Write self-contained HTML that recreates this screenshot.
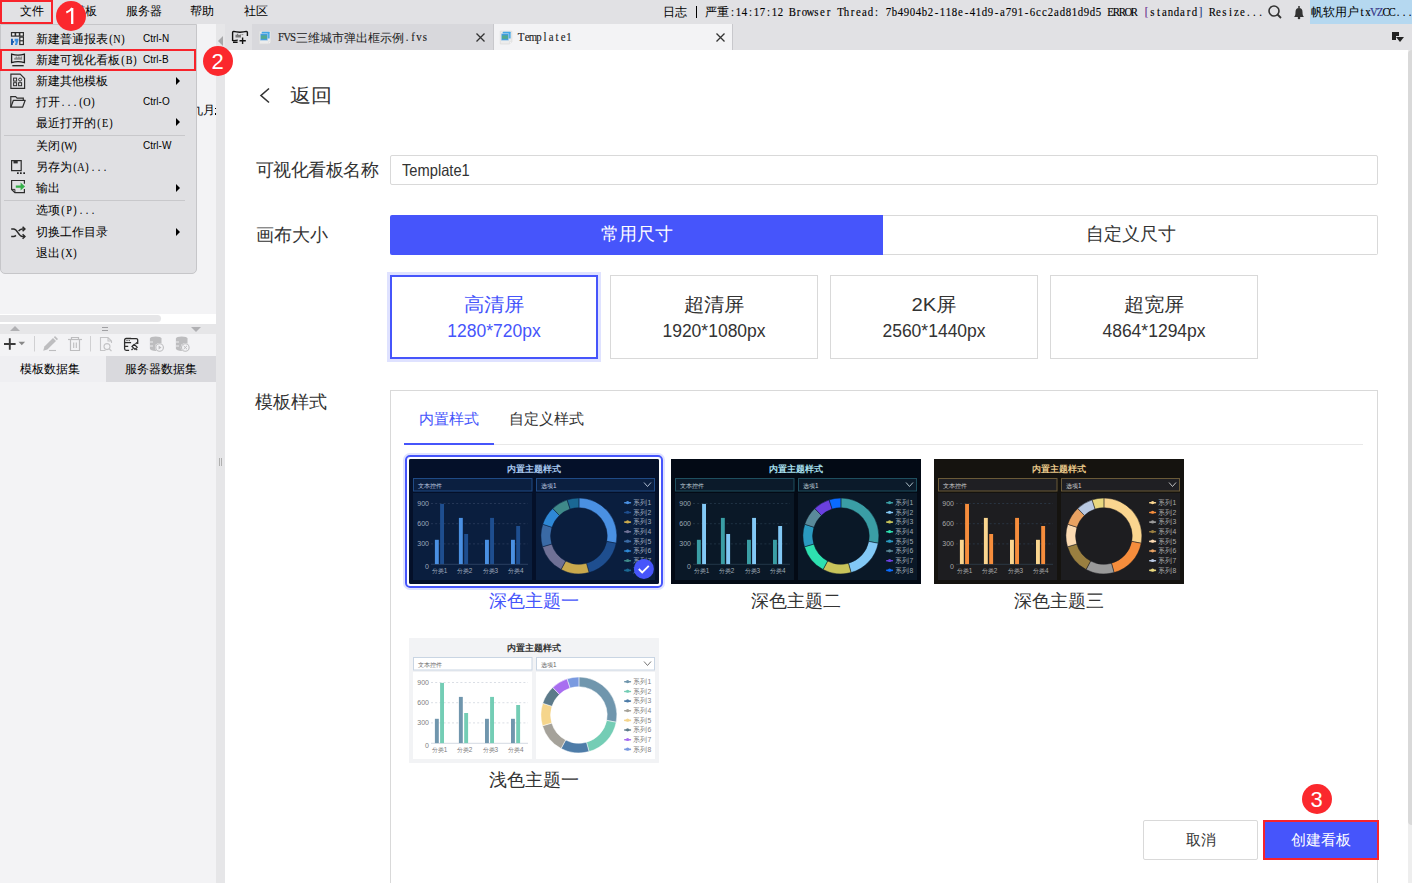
<!DOCTYPE html>
<html><head><meta charset="utf-8">
<style>
*{margin:0;padding:0;box-sizing:border-box}
html,body{width:1412px;height:883px;overflow:hidden;background:#fff;font-family:"Liberation Sans",sans-serif;color:#000}
.a{position:absolute}
.t{position:absolute;white-space:nowrap;line-height:1}
#menubar{left:0;top:0;width:1412px;height:24px;background:#e1e1e4}
#leftp{left:0;top:24px;width:216px;height:859px;background:#f3f3f5}
#split{left:216px;top:24px;width:9px;height:859px;background:#e6e6e8}
#tabbar{left:225px;top:24px;width:1187px;height:26px;background:#e1e1e4}
#content{left:225px;top:50px;width:1183px;height:833px;background:#fff}
#vscroll{left:1408px;top:50px;width:4px;height:775px;background:#d9d9d9;border-radius:4px 0 0 4px}
#vtrack{left:1408px;top:50px;width:4px;height:833px;background:#eeeeee}
.mono{font-family:"Liberation Mono",monospace;font-size:12px;letter-spacing:-1.2px}
.menu{left:0;top:24px;width:197px;height:250px;background:#e0e0e3;border:1px solid #c6c6c9;border-radius:0 0 5px 5px}
.mi{position:absolute;left:36px;font-size:12px;line-height:1;white-space:nowrap}
.sc{position:absolute;left:143px;font-size:10px;line-height:1;white-space:nowrap}
.m{font-family:"Liberation Mono",monospace;font-size:12px;letter-spacing:-1.2px}
.sep{position:absolute;left:4px;width:181px;height:1px;background:#c8c8cb}
.arr{position:absolute;left:176px;width:0;height:0;border-left:4px solid #000;border-top:4px solid transparent;border-bottom:4px solid transparent}
.badge{position:absolute;width:30px;height:30px;border-radius:50%;background:#fb282d;color:#fff;font-size:22px;line-height:31px;text-align:center;font-family:"Liberation Sans",sans-serif}
.lbl{position:absolute;font-size:18px;color:#333;line-height:1;white-space:nowrap}
.card{position:absolute;top:275px;width:208px;height:84px;border:1px solid #d9d9d9;background:#fff;text-align:center;color:#333}
.card .c1{position:absolute;left:0;right:0;top:18px;font-size:20.3px;line-height:1;transform:scaleY(0.93);transform-origin:50% 90%}
.card .c2{position:absolute;left:0;right:0;top:46.5px;font-size:17.5px;line-height:1}
</style></head><body>
<div id="menubar" class="a"></div>
<div id="leftp" class="a"></div>
<div id="split" class="a"></div>
<div id="tabbar" class="a"></div>
<div id="content" class="a"></div>
<div id="vtrack" class="a"></div><div id="vscroll" class="a"></div>

<!-- menubar text -->
<div class="t" style="left:20px;top:5px;font-size:12px">文件</div>
<div class="t" style="left:73px;top:5px;font-size:12px">模板</div>
<div class="t" style="left:126px;top:5px;font-size:12px">服务器</div>
<div class="t" style="left:190px;top:5px;font-size:12px">帮助</div>
<div class="t" style="left:244px;top:5px;font-size:12px">社区</div>

<div class="t" style="left:663px;top:6px;font-size:12px">日志</div>
<div class="a" style="left:696px;top:6px;width:1px;height:12px;background:#000"></div>
<div class="t" style="left:705px;top:6px;font-size:12px">严重</div>
<svg class="a" style="left:0;top:0" width="1300" height="24" viewBox="0 0 1300 24"><text transform="scale(0.8,1)" y="16" font-family="Liberation Serif" font-size="13.5" text-anchor="middle" fill="#000" stroke="#000" stroke-width="0.15"><tspan x="915.6">:</tspan><tspan x="923.1">1</tspan><tspan x="930.6">4</tspan><tspan x="938.1">:</tspan><tspan x="945.6">1</tspan><tspan x="953.1">7</tspan><tspan x="960.6">:</tspan><tspan x="968.1">1</tspan><tspan x="975.6">2</tspan><tspan x="990.6">B</tspan><tspan x="998.1">r</tspan><tspan x="1005.6">o</tspan><tspan x="1013.1">w</tspan><tspan x="1020.6">s</tspan><tspan x="1028.1">e</tspan><tspan x="1035.6">r</tspan><tspan x="1050.6">T</tspan><tspan x="1058.1">h</tspan><tspan x="1065.6">r</tspan><tspan x="1073.1">e</tspan><tspan x="1080.6">a</tspan><tspan x="1088.1">d</tspan><tspan x="1095.6">:</tspan><tspan x="1110.6">7</tspan><tspan x="1118.1">b</tspan><tspan x="1125.6">4</tspan><tspan x="1133.1">9</tspan><tspan x="1140.6">0</tspan><tspan x="1148.1">4</tspan><tspan x="1155.6">b</tspan><tspan x="1163.1">2</tspan><tspan x="1170.6">-</tspan><tspan x="1178.1">1</tspan><tspan x="1185.6">1</tspan><tspan x="1193.1">8</tspan><tspan x="1200.6">e</tspan><tspan x="1208.1">-</tspan><tspan x="1215.6">4</tspan><tspan x="1223.1">1</tspan><tspan x="1230.6">d</tspan><tspan x="1238.1">9</tspan><tspan x="1245.6">-</tspan><tspan x="1253.1">a</tspan><tspan x="1260.6">7</tspan><tspan x="1268.1">9</tspan><tspan x="1275.6">1</tspan><tspan x="1283.1">-</tspan><tspan x="1290.6">6</tspan><tspan x="1298.1">c</tspan><tspan x="1305.6">c</tspan><tspan x="1313.1">2</tspan><tspan x="1320.6">a</tspan><tspan x="1328.1">d</tspan><tspan x="1335.6">8</tspan><tspan x="1343.1">1</tspan><tspan x="1350.6">d</tspan><tspan x="1358.1">9</tspan><tspan x="1365.6">d</tspan><tspan x="1373.1">5</tspan><tspan x="1388.1">E</tspan><tspan x="1395.6">R</tspan><tspan x="1403.1">R</tspan><tspan x="1410.6">O</tspan><tspan x="1418.1">R</tspan><tspan x="1433.1" fill="#7a1fa2">[</tspan><tspan x="1440.6">s</tspan><tspan x="1448.1">t</tspan><tspan x="1455.6">a</tspan><tspan x="1463.1">n</tspan><tspan x="1470.6">d</tspan><tspan x="1478.1">a</tspan><tspan x="1485.6">r</tspan><tspan x="1493.1">d</tspan><tspan x="1500.6" fill="#1f3fa2">]</tspan><tspan x="1515.6">R</tspan><tspan x="1523.1">e</tspan><tspan x="1530.6">s</tspan><tspan x="1538.1">i</tspan><tspan x="1545.6">z</tspan><tspan x="1553.1">e</tspan><tspan x="1560.6">.</tspan><tspan x="1568.1">.</tspan><tspan x="1575.6">.</tspan></text></svg>
<div class="a" style="left:1310px;top:0;width:102px;height:24px;background:#b5d8f0"></div>
<div class="a" style="left:0;top:0;width:1412px;height:24px;overflow:hidden"><svg class="a" style="left:0;top:0px" width="1412" height="24" viewBox="0 0 1412 24"><text y="16.2" font-family="Liberation Sans,sans-serif" font-size="12" fill="#000"><tspan x="1311.0">帆</tspan><tspan x="1323.0">软</tspan><tspan x="1335.0">用</tspan><tspan x="1347.0">户</tspan></text><text transform="scale(0.8,1)" y="16.2" font-family="Liberation Serif" font-size="13.5" text-anchor="middle" fill="#000" stroke="#000" stroke-width="0.15"><tspan x="1702.5">t</tspan><tspan x="1710.0">x</tspan><tspan x="1717.5" fill="#3a3aa0">V</tspan><tspan x="1725.0" fill="#3a3aa0">Z</tspan><tspan x="1732.5">C</tspan><tspan x="1740.0">C</tspan><tspan x="1747.5">.</tspan><tspan x="1755.0">.</tspan><tspan x="1762.5">.</tspan></text></svg></div>

<!-- left panel lower -->
<div class="a" style="left:197px;top:100px;width:19px;height:20px;overflow:hidden"><div class="t" style="left:-6px;top:4px;font-size:12px">九月</div><div class="a" style="left:18px;top:8px;width:1px;height:1px;background:#000"></div><div class="a" style="left:18px;top:13px;width:1px;height:2px;background:#000"></div></div>
<div class="a" style="left:0;top:314px;width:216px;height:10px;background:#fff"></div>
<div class="a" style="left:0;top:315px;width:161px;height:7px;background:#e6e6e8;border-radius:0 4px 4px 0"></div>
<div class="a" style="left:0;top:324px;width:216px;height:10px;background:#e6e6e8"></div>
<div class="a" style="left:10px;top:326px;width:0;height:0;border-left:5px solid transparent;border-right:5px solid transparent;border-bottom:5px solid #b0b0b3"></div>
<div class="a" style="left:102px;top:327px;width:6px;height:1px;background:#a0a0a3"></div>
<div class="a" style="left:102px;top:330px;width:6px;height:1px;background:#a0a0a3"></div>
<div class="a" style="left:191px;top:327px;width:0;height:0;border-left:5px solid transparent;border-right:5px solid transparent;border-top:5px solid #b0b0b3"></div>
<svg class="a" style="left:0;top:334px" width="216" height="22" viewBox="0 0 216 22">
 <path d="M4 10h11.6M9.8 4.2v11.6" stroke="#3a3a3a" stroke-width="1.9"/>
 <path d="M18.5 7.8h6.6l-3.3 3.4z" fill="#888"/>
 <path d="M34.5 2v15.5M90.5 2v15.5" stroke="#d0d0d2"/>
 <path d="M43.2 16.8l1.2-4.2 8.6-8.6 3 3-8.6 8.6z" fill="#bdbdbf"/><path d="M53.8 3.2l1.2-1.2 3 3-1.2 1.2z" fill="#bdbdbf"/><path d="M49 16.5h7" stroke="#bdbdbf" stroke-width="1.1"/>
 <path d="M68 5.5h14" stroke="#bdbdbf" stroke-width="1.2"/><path d="M71.5 5.5v-2h7v2" stroke="#bdbdbf" stroke-width="1.2" fill="none"/><path d="M70.5 6v10.5h9V6" stroke="#bdbdbf" stroke-width="1.2" fill="none"/><path d="M73.7 8.5v5.5M76.3 8.5v5.5" stroke="#bdbdbf" stroke-width="1.1"/>
 <path d="M105.5 16.5h-5v-13h7.5l3.5 3.5v2M108 3.5v3.5h3.5" stroke="#c4c4c6" stroke-width="1.1" fill="none"/><circle cx="107" cy="12.6" r="3" stroke="#c4c4c6" stroke-width="1.1" fill="none"/><path d="M109.2 14.8l2.3 2.3" stroke="#c4c4c6" stroke-width="1.3"/>
 <path d="M131 4.6h5.2a1.5 1.5 0 0 1 1.5 1.5v4M124.6 10v-4a1.5 1.5 0 0 1 1.5-1.5h5M124.6 10v4.8a1.5 1.5 0 0 0 1.5 1.5h3" stroke="#2e2e2e" stroke-width="1.3" fill="none"/>
 <path d="M124.6 8.6h6.5M124.6 12.3h3.6" stroke="#2e2e2e" stroke-width="1.2"/><circle cx="127" cy="6.6" r=".7" fill="#2e2e2e"/><circle cx="129.2" cy="6.6" r=".7" fill="#2e2e2e"/>
 <path d="M131.5 16l1.3-1.3M135.5 10l1.6-1.6" stroke="#2e2e2e" stroke-width="1.3"/><path d="M132 12.5l2.2-2.2 3 3-2.2 2.2z" stroke="#2e2e2e" stroke-width="1.2" fill="none"/><path d="M137.2 16.2l-1-1" stroke="#2e2e2e" stroke-width="1.2"/>
 <ellipse cx="155.7" cy="4.6" rx="5.8" ry="2.1" fill="#bdbdbf"/><path d="M149.9 4.6v10.2c0 1.2 2.6 2.1 5.8 2.1s5.8-.9 5.8-2.1V4.6" fill="#bdbdbf"/><path d="M150 8h3M150 12h3" stroke="#f3f3f5" stroke-width=".9"/>
 <circle cx="159.6" cy="13.5" r="4.6" fill="#f3f3f5"/><circle cx="159.6" cy="13.5" r="3.8" fill="none" stroke="#bdbdbf" stroke-width="1.1"/><path d="M158.6 11.6v3.8l2.9-1.9z" fill="#bdbdbf"/>
 <ellipse cx="181.7" cy="4.6" rx="5.8" ry="2.1" fill="#bdbdbf"/><path d="M175.9 4.6v10.2c0 1.2 2.6 2.1 5.8 2.1s5.8-.9 5.8-2.1V4.6" fill="#bdbdbf"/><path d="M176 8h3M176 12h3" stroke="#f3f3f5" stroke-width=".9"/>
 <circle cx="185.3" cy="13.5" r="4.6" fill="#f3f3f5"/><circle cx="185.3" cy="13.5" r="3.8" fill="none" stroke="#bdbdbf" stroke-width="1.1"/><path d="M183.6 11.8l3.4 3.4M187 11.8l-3.4 3.4" stroke="#bdbdbf" stroke-width="1"/>
</svg>
<div class="a" style="left:0;top:356px;width:106px;height:26px;background:#efeff2"></div>
<div class="a" style="left:106px;top:356px;width:110px;height:26px;background:#d9d9dd"></div>
<div class="t" style="left:20px;top:363px;font-size:12px">模板数据集</div>
<div class="t" style="left:125px;top:363px;font-size:12px">服务器数据集</div>
<div class="a" style="left:219px;top:458px;width:1px;height:8px;background:#b0b0b0"></div>
<div class="a" style="left:221px;top:458px;width:1px;height:8px;background:#b0b0b0"></div>
<div class="a" style="left:218px;top:36px;width:0;height:0;border-right:5px solid #a8a8aa;border-top:5px solid transparent;border-bottom:5px solid transparent"></div>

<!-- dropdown menu -->
<div class="a menu"></div>
<div class="a" style="left:0;top:49px;width:196px;height:22px;border:2px solid #f8232b"></div>
<svg class="a" style="left:0;top:27px" width="136" height="20" viewBox="0 27 136 20"><text y="42.8" font-family="Liberation Sans,sans-serif" font-size="12" fill="#000"><tspan x="36.0">新</tspan><tspan x="48.0">建</tspan><tspan x="60.0">普</tspan><tspan x="72.0">通</tspan><tspan x="84.0">报</tspan><tspan x="96.0">表</tspan></text><text transform="scale(0.78,1)" y="42.8" font-family="Liberation Serif" font-size="13" text-anchor="middle" fill="#000" stroke="#000" stroke-width="0.1"><tspan x="142.3">(</tspan><tspan x="150.0">N</tspan><tspan x="157.7">)</tspan></text></svg><div class="sc" style="top:34px">Ctrl-N</div>
<svg class="a" style="left:0;top:48px" width="148" height="20" viewBox="0 48 148 20"><text y="63.8" font-family="Liberation Sans,sans-serif" font-size="12" fill="#000"><tspan x="36.0">新</tspan><tspan x="48.0">建</tspan><tspan x="60.0">可</tspan><tspan x="72.0">视</tspan><tspan x="84.0">化</tspan><tspan x="96.0">看</tspan><tspan x="108.0">板</tspan></text><text transform="scale(0.78,1)" y="63.8" font-family="Liberation Serif" font-size="13" text-anchor="middle" fill="#000" stroke="#000" stroke-width="0.1"><tspan x="157.7">(</tspan><tspan x="165.4">B</tspan><tspan x="173.1">)</tspan></text></svg><div class="sc" style="top:55px">Ctrl-B</div>
<svg class="a" style="left:0;top:69px" width="118" height="20" viewBox="0 69 118 20"><text y="84.8" font-family="Liberation Sans,sans-serif" font-size="12" fill="#000"><tspan x="36.0">新</tspan><tspan x="48.0">建</tspan><tspan x="60.0">其</tspan><tspan x="72.0">他</tspan><tspan x="84.0">模</tspan><tspan x="96.0">板</tspan></text></svg><div class="arr" style="top:77px"></div>
<svg class="a" style="left:0;top:90px" width="106" height="20" viewBox="0 90 106 20"><text y="105.8" font-family="Liberation Sans,sans-serif" font-size="12" fill="#000"><tspan x="36.0">打</tspan><tspan x="48.0">开</tspan></text><text transform="scale(0.78,1)" y="105.8" font-family="Liberation Serif" font-size="13" text-anchor="middle" fill="#000" stroke="#000" stroke-width="0.1"><tspan x="80.8">.</tspan><tspan x="88.5">.</tspan><tspan x="96.2">.</tspan><tspan x="103.8">(</tspan><tspan x="111.5">O</tspan><tspan x="119.2">)</tspan></text></svg><div class="sc" style="top:97px">Ctrl-O</div>
<svg class="a" style="left:0;top:111px" width="124" height="20" viewBox="0 111 124 20"><text y="126.8" font-family="Liberation Sans,sans-serif" font-size="12" fill="#000"><tspan x="36.0">最</tspan><tspan x="48.0">近</tspan><tspan x="60.0">打</tspan><tspan x="72.0">开</tspan><tspan x="84.0">的</tspan></text><text transform="scale(0.78,1)" y="126.8" font-family="Liberation Serif" font-size="13" text-anchor="middle" fill="#000" stroke="#000" stroke-width="0.1"><tspan x="126.9">(</tspan><tspan x="134.6">E</tspan><tspan x="142.3">)</tspan></text></svg><div class="arr" style="top:118px"></div>
<div class="sep" style="top:135px"></div>
<svg class="a" style="left:0;top:134px" width="88" height="20" viewBox="0 134 88 20"><text y="149.8" font-family="Liberation Sans,sans-serif" font-size="12" fill="#000"><tspan x="36.0">关</tspan><tspan x="48.0">闭</tspan></text><text transform="scale(0.78,1)" y="149.8" font-family="Liberation Serif" font-size="13" text-anchor="middle" fill="#000" stroke="#000" stroke-width="0.1"><tspan x="80.8">(</tspan><tspan x="88.5">W</tspan><tspan x="96.2">)</tspan></text></svg><div class="sc" style="top:141px">Ctrl-W</div>
<svg class="a" style="left:0;top:155px" width="118" height="20" viewBox="0 155 118 20"><text y="170.8" font-family="Liberation Sans,sans-serif" font-size="12" fill="#000"><tspan x="36.0">另</tspan><tspan x="48.0">存</tspan><tspan x="60.0">为</tspan></text><text transform="scale(0.78,1)" y="170.8" font-family="Liberation Serif" font-size="13" text-anchor="middle" fill="#000" stroke="#000" stroke-width="0.1"><tspan x="96.2">(</tspan><tspan x="103.8">A</tspan><tspan x="111.5">)</tspan><tspan x="119.2">.</tspan><tspan x="126.9">.</tspan><tspan x="134.6">.</tspan></text></svg>
<svg class="a" style="left:0;top:176px" width="70" height="20" viewBox="0 176 70 20"><text y="191.8" font-family="Liberation Sans,sans-serif" font-size="12" fill="#000"><tspan x="36.0">输</tspan><tspan x="48.0">出</tspan></text></svg><div class="arr" style="top:184px"></div>
<div class="sep" style="top:200px"></div>
<svg class="a" style="left:0;top:198px" width="106" height="20" viewBox="0 198 106 20"><text y="213.8" font-family="Liberation Sans,sans-serif" font-size="12" fill="#000"><tspan x="36.0">选</tspan><tspan x="48.0">项</tspan></text><text transform="scale(0.78,1)" y="213.8" font-family="Liberation Serif" font-size="13" text-anchor="middle" fill="#000" stroke="#000" stroke-width="0.1"><tspan x="80.8">(</tspan><tspan x="88.5">P</tspan><tspan x="96.2">)</tspan><tspan x="103.8">.</tspan><tspan x="111.5">.</tspan><tspan x="119.2">.</tspan></text></svg>
<svg class="a" style="left:0;top:220px" width="118" height="20" viewBox="0 220 118 20"><text y="235.8" font-family="Liberation Sans,sans-serif" font-size="12" fill="#000"><tspan x="36.0">切</tspan><tspan x="48.0">换</tspan><tspan x="60.0">工</tspan><tspan x="72.0">作</tspan><tspan x="84.0">目</tspan><tspan x="96.0">录</tspan></text></svg><div class="arr" style="top:228px"></div>
<svg class="a" style="left:0;top:241px" width="88" height="20" viewBox="0 241 88 20"><text y="256.8" font-family="Liberation Sans,sans-serif" font-size="12" fill="#000"><tspan x="36.0">退</tspan><tspan x="48.0">出</tspan></text><text transform="scale(0.78,1)" y="256.8" font-family="Liberation Serif" font-size="13" text-anchor="middle" fill="#000" stroke="#000" stroke-width="0.1"><tspan x="80.8">(</tspan><tspan x="88.5">X</tspan><tspan x="96.2">)</tspan></text></svg>
<svg class="a" style="left:0;top:24px" width="30" height="240" viewBox="0 0 30 240">
 <rect x="10.9" y="8" width="13.1" height="4.7" fill="#2e2e2e"/><rect x="12.1" y="9.2" width="2.5" height="2.3" fill="#f0f0f0"/><rect x="16.2" y="9.2" width="2.6" height="2.3" fill="#f0f0f0"/><rect x="20.4" y="9.2" width="2.4" height="2.3" fill="#f0f0f0"/>
 <rect x="19.2" y="12.5" width="4.8" height="8.6" fill="#2e2e2e"/><rect x="20.4" y="13.7" width="2.4" height="2.5" fill="#f0f0f0"/><rect x="20.4" y="17.4" width="2.4" height="2.5" fill="#f0f0f0"/>
 <path d="M11 14.8h1.9v2.3h1.1v1.6h-1.1v2.4H11z" fill="#1a5fb4"/><path d="M14.6 14.8h3.8v1.6l-1.3 4.7h-2.2l1-3.6h-1.3z" fill="#3d8fe0"/>
 <path d="M11.6 30.2c2.2.6 4.4.9 6.4.9s4.2-.3 6.4-.9v8.4c-2.2-.6-4.4-.9-6.4-.9s-4.2.3-6.4.9z" stroke="#1e1e1e" stroke-width="1.3" fill="none"/>
 <path d="M14.2 35.8v-1.9l1.6-.5v-.9h1.3v.9l1.1.2v-1h1.4v1l1.2-.2v-.8h1.3v3.2z" fill="#8a8a8a"/><path d="M12.3 41.7h11.4" stroke="#1e1e1e" stroke-width="1.3"/>
 <path d="M10.9 50.1h9.3l4.4 4.4v9.9H10.9z" stroke="#2e2e2e" stroke-width="1.2" fill="none"/>
 <rect x="13.6" y="54.1" width="3" height="3" stroke="#2e2e2e" stroke-width="1" fill="none"/><circle cx="20.1" cy="55.6" r="1.5" stroke="#2e2e2e" stroke-width="1" fill="none"/><rect x="13.6" y="58.7" width="3" height="3" stroke="#2e2e2e" stroke-width="1" fill="none"/><rect x="18.6" y="58.7" width="3" height="3" stroke="#2e2e2e" stroke-width="1" fill="none"/>
 <path d="M10.8 83.2V72.6h4.8l1.5 1.5h6.2v2.2" stroke="#2e2e2e" stroke-width="1.2" fill="none"/><path d="M10.8 83.2l2.6-6.9h11.8l-2.6 6.9z" stroke="#2e2e2e" stroke-width="1.2" fill="none" stroke-linejoin="round"/>
 <path d="M11.6 136.6h9.6v10.1h-9.6z" stroke="#2e2e2e" stroke-width="1.2" fill="none"/><rect x="13.5" y="137" width="4.2" height="2.4" fill="#2e2e2e"/>
 <rect x="17" y="148.3" width="1.7" height="1.7" fill="#222"/><rect x="20" y="148.3" width="1.7" height="1.7" fill="#222"/><rect x="23.3" y="148.3" width="1.7" height="1.7" fill="#222"/>
 <path d="M24.4 159.8v-3.3H11.6v8.9l3.3 3.3h9.5v-3.6" stroke="#2e2e2e" stroke-width="1.2" fill="none"/><path d="M11.8 165.4h3.1v3.1" stroke="#2e2e2e" stroke-width="1" fill="none"/>
 <path d="M15.8 161.4h4.8v-2.8l4.4 4-4.4 4v-2.8h-4.8z" fill="#35b04a"/>
 <path d="M11.2 205h2.4c1.9 0 2.9 1.4 4.3 3.7s2.5 3.8 4.5 3.8h2.2" stroke="#2a2a2a" stroke-width="1.5" fill="none"/>
 <path d="M11.2 212.5h2.4c.9 0 1.6-.4 2.3-1.1M18.6 207.2c.9-1.4 1.9-2.2 3.6-2.2h2.2" stroke="#2a2a2a" stroke-width="1.5" fill="none"/>
 <path d="M22.6 202.8l2.3 2.2-2.3 2.2M22.6 210.3l2.3 2.2-2.3 2.2" stroke="#2a2a2a" stroke-width="1.5" fill="none"/>
</svg>
<div class="badge" style="left:56px;top:1px"><svg width="30" height="30" viewBox="0 0 30 30" style="position:absolute;left:-0.5px;top:0"><path d="M16.2 7v16" stroke="#fff" stroke-width="2.3"/><path d="M10.3 11.6c2.6-1 4.6-2.6 5.9-4.6" stroke="#fff" stroke-width="2.1" fill="none"/></svg></div>
<div class="a" style="left:0;top:0;width:53px;height:24px;border:2px solid #f8232b"></div>
<div class="badge" style="left:202.5px;top:46px">2</div>

<!-- tabbar -->
<svg class="a" style="left:225px;top:24px" width="26" height="26" viewBox="0 0 26 26">
 <path d="M7.6 17V8.6c0-.8.3-1.2 1-1.2 2 .6 4 .8 6.4.8s4.4-.2 6.4-.8c.7 0 1 .4 1 1.2v3.4" stroke="#111" stroke-width="1.4" fill="none"/>
 <path d="M7.6 16.4c.5.3 1 .3 1.6.2 1.3-.3 2.5-.4 3.6-.4" stroke="#111" stroke-width="1.3" fill="none"/>
 <path d="M10.5 13.4v-2.6h1.4v-1h1.4v1.2h1.4v-.5h1.3v2.9z" fill="#7a7a7a"/><path d="M16.5 10.6h1.8" stroke="#7a7a7a" stroke-width=".8"/>
 <path d="M8 18.3h4.6M14.5 16.7h6.3M17.6 13.4v6.6" stroke="#111" stroke-width="1.4"/>
</svg>
<div class="a" style="left:252px;top:24px;width:241px;height:26px;background:#d8d8dc"></div>
<div class="a" style="left:493px;top:24px;width:240px;height:26px;background:#f3f3f5;border-left:1px solid #c8c8cc;border-right:1px solid #c8c8cc"></div>
<svg class="a" style="left:258px;top:29.5px" width="14" height="16" viewBox="0 0 14 16">
 <path d="M1.3 1.2h11.5v10.5l-2.3 2.3H1.3z" fill="#ececec" stroke="#dcdcdc" stroke-width=".8"/><path d="M10.5 14v-2.3h2.3" fill="#f8f8f8" stroke="#dcdcdc" stroke-width=".6"/><rect x="3.8" y="1.8" width="7.8" height="6.8" rx=".5" fill="#40a6e8"/><rect x="2.2" y="3.6" width="7.5" height="6.8" rx=".5" fill="#3c9ae0" stroke="#ececec" stroke-width=".5"/><rect x="3" y="5.5" width="6" height="3.2" fill="#5ab070"/><path d="M4 5.6v3M6 5.6v3M8 5.6v3" stroke="#3c9ae0" stroke-width=".6"/>
</svg>
<svg class="a" style="left:0;top:24px" width="438" height="26" viewBox="0 24 438 26"><text y="41.5" font-family="Liberation Sans,sans-serif" font-size="12" fill="#222"><tspan x="296.0">三</tspan><tspan x="308.0">维</tspan><tspan x="320.0">城</tspan><tspan x="332.0">市</tspan><tspan x="344.0">弹</tspan><tspan x="356.0">出</tspan><tspan x="368.0">框</tspan><tspan x="380.0">示</tspan><tspan x="392.0">例</tspan></text><text transform="scale(0.8,1)" y="41.5" font-family="Liberation Serif" font-size="13.5" text-anchor="middle" fill="#222" stroke="#222" stroke-width="0.15"><tspan x="351.2">F</tspan><tspan x="358.8">V</tspan><tspan x="366.2">S</tspan><tspan x="508.8">.</tspan><tspan x="516.2">f</tspan><tspan x="523.8">v</tspan><tspan x="531.2">s</tspan></text></svg>
<svg class="a" style="left:475px;top:32px" width="11" height="11" viewBox="0 0 11 11"><path d="M1.5 1.5l8 8M9.5 1.5l-8 8" stroke="#333" stroke-width="1.3"/></svg>
<svg class="a" style="left:499px;top:29.5px" width="14" height="16" viewBox="0 0 14 16">
 <path d="M1.3 1.2h11.5v10.5l-2.3 2.3H1.3z" fill="#ececec" stroke="#dcdcdc" stroke-width=".8"/><path d="M10.5 14v-2.3h2.3" fill="#f8f8f8" stroke="#dcdcdc" stroke-width=".6"/><rect x="3.8" y="1.8" width="7.8" height="6.8" rx=".5" fill="#40a6e8"/><rect x="2.2" y="3.6" width="7.5" height="6.8" rx=".5" fill="#3c9ae0" stroke="#ececec" stroke-width=".5"/><rect x="3" y="5.5" width="6" height="3.2" fill="#5ab070"/><path d="M4 5.6v3M6 5.6v3M8 5.6v3" stroke="#3c9ae0" stroke-width=".6"/>
</svg>
<svg class="a" style="left:0;top:24px" width="582" height="26" viewBox="0 24 582 26"><text transform="scale(0.8,1)" y="41.5" font-family="Liberation Serif" font-size="13.5" text-anchor="middle" fill="#222" stroke="#222" stroke-width="0.15"><tspan x="651.2">T</tspan><tspan x="658.8">e</tspan><tspan x="666.2">m</tspan><tspan x="673.8">p</tspan><tspan x="681.2">l</tspan><tspan x="688.8">a</tspan><tspan x="696.2">t</tspan><tspan x="703.8">e</tspan><tspan x="711.2">1</tspan></text></svg>
<svg class="a" style="left:715px;top:32px" width="11" height="11" viewBox="0 0 11 11"><path d="M1.5 1.5l8 8M9.5 1.5l-8 8" stroke="#333" stroke-width="1.3"/></svg>
<svg class="a" style="left:1390px;top:31px" width="16" height="13" viewBox="0 0 16 13">
 <path d="M2 1h7v4h-3v4h-4z" fill="#222"/><path d="M6 6h8l-4 5z" fill="#222"/>
</svg>
<!-- search & bell -->
<svg class="a" style="left:1266px;top:4px" width="42" height="16" viewBox="0 0 42 16">
 <circle cx="8" cy="7" r="5" stroke="#333" stroke-width="1.6" fill="none"/><path d="M11.5 10.5l3.5 3.5" stroke="#333" stroke-width="1.8"/>
 <path d="M28 13c1-1 1.5-2 1.5-5a3.5 4 0 0 1 7 0c0 3 .5 4 1.5 5z" fill="#333"/><circle cx="33" cy="14" r="1.3" fill="#333"/><circle cx="33" cy="3" r="1" fill="#333"/>
</svg>

<!-- content -->
<svg class="a" style="left:258px;top:86px" width="14" height="20" viewBox="0 0 14 20"><path d="M11 2.5l-8 7 8 7" stroke="#333" stroke-width="1.6" fill="none"/></svg>
<div class="lbl" style="left:289.5px;top:85px;font-size:20.8px;transform:scaleY(0.9);transform-origin:0 100%">返回</div>
<div class="lbl" style="left:256px;top:161px;letter-spacing:-0.55px">可视化看板名称</div>
<div class="a" style="left:390px;top:155px;width:988px;height:30px;border:1px solid #d9d9d9;border-radius:2px"></div>
<div class="t" style="left:401.5px;top:161.5px;font-size:16.5px;color:#333;transform:scaleX(0.89);transform-origin:0 0">Template1</div>
<div class="lbl" style="left:256px;top:226px">画布大小</div>
<div class="a" style="left:390px;top:215px;width:493px;height:40px;background:#4655fb;border-radius:2px 0 0 2px"></div>
<div class="a" style="left:883px;top:215px;width:495px;height:40px;border:1px solid #d9d9d9;border-left:0;border-radius:0 2px 2px 0"></div>
<div class="t" style="left:390px;top:225px;width:493px;text-align:center;font-size:18px;color:#fff">常用尺寸</div>
<div class="t" style="left:883px;top:225px;width:495px;text-align:center;font-size:18px;color:#333">自定义尺寸</div>
<div class="card" style="left:390px;border:2px solid #4655fb;box-shadow:0 0 0 3px #dfe2ff;color:#4655fb"><div class="c1" style="top:17px">高清屏</div><div class="c2" style="top:45.5px">1280*720px</div></div>
<div class="card" style="left:610px"><div class="c1">超清屏</div><div class="c2">1920*1080px</div></div>
<div class="card" style="left:830px"><div class="c1">2K屏</div><div class="c2">2560*1440px</div></div>
<div class="card" style="left:1050px"><div class="c1">超宽屏</div><div class="c2">4864*1294px</div></div>
<div class="lbl" style="left:255px;top:393px">模板样式</div>
<div class="a" style="left:390px;top:390px;width:988px;height:500px;border:1px solid #d9d9d9"></div>
<div class="a" style="left:404px;top:444px;width:959px;height:1px;background:#e8e8e8"></div>
<div class="a" style="left:404px;top:443px;width:90px;height:2px;background:#4655fb"></div>
<div class="t" style="left:419px;top:411px;font-size:15px;color:#4655fb">内置样式</div>
<div class="t" style="left:509px;top:411px;font-size:15px;color:#333">自定义样式</div>
<div class="a" style="left:405px;top:455px;width:258px;height:133px;border:2px solid #4655fb;border-radius:5px;box-shadow:0 0 0 2px #dfe2ff"></div>
<div id="th1" class="a" style="left:409px;top:459px;width:250px;height:125px;background:#041029;border-radius:2px"><svg class="a" style="left:0;top:0" width="250" height="125" viewBox="0 0 250 125"><rect width="250" height="125" rx="2" fill="#041029"/><text x="125" y="13.3" text-anchor="middle" font-size="8.9" font-weight="bold" fill="#a8c8f0">内置主题样式</text><rect x="4.5" y="19.5" width="118.5" height="12.5" fill="#0b1f40" stroke="#1f4a85"/><rect x="127.5" y="19.5" width="118" height="12.5" fill="#0b1f40" stroke="#1f4a85"/><text x="9" y="28.5" font-size="6.3" fill="#c0cce0">文本控件</text><text x="132" y="28.5" font-size="6.3" fill="#c0cce0">选项1</text><path d="M235 23.5l3.5 4 3.5-4" stroke="#c0cce0" stroke-width="0.9" fill="none"/><rect x="4" y="34" width="119" height="87" fill="#0a1e3e"/><rect x="127" y="34" width="119" height="87" fill="#0a1e3e"/><path d="M22 44.5H119" stroke="#2c3d5e" stroke-width="0.8" stroke-dasharray="2 2.2"/><path d="M22 64.7H119" stroke="#2c3d5e" stroke-width="0.8" stroke-dasharray="2 2.2"/><path d="M22 84.9H119" stroke="#2c3d5e" stroke-width="0.8" stroke-dasharray="2 2.2"/><path d="M22 105.3H119" stroke="#34486a" stroke-width="0.8"/><text x="20" y="46.9" text-anchor="end" font-size="7" fill="#9ea8bc">900</text><text x="20" y="67.1" text-anchor="end" font-size="7" fill="#9ea8bc">600</text><text x="20" y="87.3" text-anchor="end" font-size="7" fill="#9ea8bc">300</text><text x="20" y="109.8" text-anchor="end" font-size="7" fill="#9ea8bc">0</text><rect x="25.9" y="80.8" width="3.9" height="24.3" fill="#4a90e2"/><rect x="31.1" y="44.9" width="3.9" height="60.2" fill="#1e4e8f"/><rect x="49.9" y="58.9" width="3.9" height="46.2" fill="#4a90e2"/><rect x="55.2" y="75" width="3.9" height="30.1" fill="#1e4e8f"/><rect x="76" y="80.8" width="3.9" height="24.3" fill="#4a90e2"/><rect x="81.1" y="58.9" width="3.9" height="46.2" fill="#1e4e8f"/><rect x="102" y="80.8" width="3.9" height="24.3" fill="#4a90e2"/><rect x="107.2" y="67" width="3.9" height="38.1" fill="#1e4e8f"/><text x="22.8" y="114.2" font-size="6.4" fill="#9ea8bc">分类1</text><text x="47.8" y="114.2" font-size="6.4" fill="#9ea8bc">分类2</text><text x="73.6" y="114.2" font-size="6.4" fill="#9ea8bc">分类3</text><text x="98.9" y="114.2" font-size="6.4" fill="#9ea8bc">分类4</text><path d="M169.90 39.00A38 38 0 0 1 207.20 84.25L197.68 82.40A28.3 28.3 0 0 0 169.90 48.70Z" fill="#4a90e2" stroke="#0a1e3e" stroke-width="0.5"/><path d="M207.20 84.25A38 38 0 0 1 180.06 113.62L177.46 104.27A28.3 28.3 0 0 0 197.68 82.40Z" fill="#1e4e8f" stroke="#0a1e3e" stroke-width="0.5"/><path d="M180.06 113.62A38 38 0 0 1 152.06 110.55L156.61 101.99A28.3 28.3 0 0 0 177.46 104.27Z" fill="#c9a94d" stroke="#0a1e3e" stroke-width="0.5"/><path d="M152.06 110.55A38 38 0 0 1 133.46 87.79L142.77 85.04A28.3 28.3 0 0 0 156.61 101.99Z" fill="#6f7196" stroke="#0a1e3e" stroke-width="0.5"/><path d="M133.46 87.79A38 38 0 0 1 133.76 65.26L142.99 68.25A28.3 28.3 0 0 0 142.77 85.04Z" fill="#3a6aa5" stroke="#0a1e3e" stroke-width="0.5"/><path d="M133.76 65.26A38 38 0 0 1 143.74 49.44L150.42 56.47A28.3 28.3 0 0 0 142.99 68.25Z" fill="#2e88d6" stroke="#0a1e3e" stroke-width="0.5"/><path d="M143.74 49.44A38 38 0 0 1 158.16 40.86L161.15 50.09A28.3 28.3 0 0 0 150.42 56.47Z" fill="#3f8a8a" stroke="#0a1e3e" stroke-width="0.5"/><path d="M158.16 40.86A38 38 0 0 1 169.90 39.00L169.90 48.70A28.3 28.3 0 0 0 161.15 50.09Z" fill="#1a6894" stroke="#0a1e3e" stroke-width="0.5"/><path d="M215.8 43.80h5.6" stroke="#4a90e2" stroke-width="1.6" stroke-linecap="round"/><circle cx="218.6" cy="43.60" r="1.6" fill="#4a90e2"/><text x="224.4" y="46.00" font-size="6.8" fill="#9ea8bc">系列1</text><path d="M215.8 53.45h5.6" stroke="#1e4e8f" stroke-width="1.6" stroke-linecap="round"/><circle cx="218.6" cy="53.25" r="1.6" fill="#1e4e8f"/><text x="224.4" y="55.65" font-size="6.8" fill="#9ea8bc">系列2</text><path d="M215.8 63.10h5.6" stroke="#c9a94d" stroke-width="1.6" stroke-linecap="round"/><circle cx="218.6" cy="62.90" r="1.6" fill="#c9a94d"/><text x="224.4" y="65.30" font-size="6.8" fill="#9ea8bc">系列3</text><path d="M215.8 72.75h5.6" stroke="#6f7196" stroke-width="1.6" stroke-linecap="round"/><circle cx="218.6" cy="72.55" r="1.6" fill="#6f7196"/><text x="224.4" y="74.95" font-size="6.8" fill="#9ea8bc">系列4</text><path d="M215.8 82.40h5.6" stroke="#3a6aa5" stroke-width="1.6" stroke-linecap="round"/><circle cx="218.6" cy="82.20" r="1.6" fill="#3a6aa5"/><text x="224.4" y="84.60" font-size="6.8" fill="#9ea8bc">系列5</text><path d="M215.8 92.05h5.6" stroke="#2e88d6" stroke-width="1.6" stroke-linecap="round"/><circle cx="218.6" cy="91.85" r="1.6" fill="#2e88d6"/><text x="224.4" y="94.25" font-size="6.8" fill="#9ea8bc">系列6</text><path d="M215.8 101.70h5.6" stroke="#3f8a8a" stroke-width="1.6" stroke-linecap="round"/><circle cx="218.6" cy="101.50" r="1.6" fill="#3f8a8a"/><text x="224.4" y="103.90" font-size="6.8" fill="#9ea8bc">系列7</text><path d="M215.8 111.35h5.6" stroke="#1a6894" stroke-width="1.6" stroke-linecap="round"/><circle cx="218.6" cy="111.15" r="1.6" fill="#1a6894"/><text x="224.4" y="113.55" font-size="6.8" fill="#9ea8bc">系列8</text><circle cx="234.9" cy="109.9" r="10" fill="#4655fb"/><path d="M229.8 110l3.4 3.4 6.6-6.6" stroke="#fff" stroke-width="1.8" fill="none"/></svg></div><!--/th1-->
<div id="th2" class="a" style="left:671px;top:459px;width:250px;height:125px;background:#030b17"><svg class="a" style="left:0;top:0" width="250" height="125" viewBox="0 0 250 125"><rect width="250" height="125" rx="2" fill="#030a15"/><text x="125" y="13.3" text-anchor="middle" font-size="8.9" font-weight="bold" fill="#a8e0f0">内置主题样式</text><rect x="4.5" y="19.5" width="118.5" height="12.5" fill="#0b1a2a" stroke="#1f4f5f"/><rect x="127.5" y="19.5" width="118" height="12.5" fill="#0b1a2a" stroke="#1f4f5f"/><text x="9" y="28.5" font-size="6.3" fill="#c0d0d8">文本控件</text><text x="132" y="28.5" font-size="6.3" fill="#c0d0d8">选项1</text><path d="M235 23.5l3.5 4 3.5-4" stroke="#c0d0d8" stroke-width="0.9" fill="none"/><rect x="4" y="34" width="119" height="87" fill="#0a1827"/><rect x="127" y="34" width="119" height="87" fill="#0a1827"/><path d="M22 44.5H119" stroke="#24384a" stroke-width="0.8" stroke-dasharray="2 2.2"/><path d="M22 64.7H119" stroke="#24384a" stroke-width="0.8" stroke-dasharray="2 2.2"/><path d="M22 84.9H119" stroke="#24384a" stroke-width="0.8" stroke-dasharray="2 2.2"/><path d="M22 105.3H119" stroke="#2a4050" stroke-width="0.8"/><text x="20" y="46.9" text-anchor="end" font-size="7" fill="#9ea8b4">900</text><text x="20" y="67.1" text-anchor="end" font-size="7" fill="#9ea8b4">600</text><text x="20" y="87.3" text-anchor="end" font-size="7" fill="#9ea8b4">300</text><text x="20" y="109.8" text-anchor="end" font-size="7" fill="#9ea8b4">0</text><rect x="25.9" y="80.8" width="3.9" height="24.3" fill="#3a9ea5"/><rect x="31.1" y="44.9" width="3.9" height="60.2" fill="#82c8f5"/><rect x="49.9" y="58.9" width="3.9" height="46.2" fill="#3a9ea5"/><rect x="55.2" y="75" width="3.9" height="30.1" fill="#82c8f5"/><rect x="76" y="80.8" width="3.9" height="24.3" fill="#3a9ea5"/><rect x="81.1" y="58.9" width="3.9" height="46.2" fill="#82c8f5"/><rect x="102" y="80.8" width="3.9" height="24.3" fill="#3a9ea5"/><rect x="107.2" y="67" width="3.9" height="38.1" fill="#82c8f5"/><text x="22.8" y="114.2" font-size="6.4" fill="#9ea8b4">分类1</text><text x="47.8" y="114.2" font-size="6.4" fill="#9ea8b4">分类2</text><text x="73.6" y="114.2" font-size="6.4" fill="#9ea8b4">分类3</text><text x="98.9" y="114.2" font-size="6.4" fill="#9ea8b4">分类4</text><path d="M169.90 39.00A38 38 0 0 1 207.20 84.25L197.68 82.40A28.3 28.3 0 0 0 169.90 48.70Z" fill="#3a9ea5" stroke="#0a1827" stroke-width="0.5"/><path d="M207.20 84.25A38 38 0 0 1 180.06 113.62L177.46 104.27A28.3 28.3 0 0 0 197.68 82.40Z" fill="#82c8f5" stroke="#0a1827" stroke-width="0.5"/><path d="M180.06 113.62A38 38 0 0 1 152.06 110.55L156.61 101.99A28.3 28.3 0 0 0 177.46 104.27Z" fill="#c8c45a" stroke="#0a1827" stroke-width="0.5"/><path d="M152.06 110.55A38 38 0 0 1 133.46 87.79L142.77 85.04A28.3 28.3 0 0 0 156.61 101.99Z" fill="#2ee0b0" stroke="#0a1827" stroke-width="0.5"/><path d="M133.46 87.79A38 38 0 0 1 133.76 65.26L142.99 68.25A28.3 28.3 0 0 0 142.77 85.04Z" fill="#2a9ac0" stroke="#0a1827" stroke-width="0.5"/><path d="M133.76 65.26A38 38 0 0 1 143.74 49.44L150.42 56.47A28.3 28.3 0 0 0 142.99 68.25Z" fill="#5a8a9a" stroke="#0a1827" stroke-width="0.5"/><path d="M143.74 49.44A38 38 0 0 1 158.16 40.86L161.15 50.09A28.3 28.3 0 0 0 150.42 56.47Z" fill="#6a40e0" stroke="#0a1827" stroke-width="0.5"/><path d="M158.16 40.86A38 38 0 0 1 169.90 39.00L169.90 48.70A28.3 28.3 0 0 0 161.15 50.09Z" fill="#0a6aff" stroke="#0a1827" stroke-width="0.5"/><path d="M215.8 43.80h5.6" stroke="#3a9ea5" stroke-width="1.6" stroke-linecap="round"/><circle cx="218.6" cy="43.60" r="1.6" fill="#3a9ea5"/><text x="224.4" y="46.00" font-size="6.8" fill="#9ea8b4">系列1</text><path d="M215.8 53.45h5.6" stroke="#82c8f5" stroke-width="1.6" stroke-linecap="round"/><circle cx="218.6" cy="53.25" r="1.6" fill="#82c8f5"/><text x="224.4" y="55.65" font-size="6.8" fill="#9ea8b4">系列2</text><path d="M215.8 63.10h5.6" stroke="#c8c45a" stroke-width="1.6" stroke-linecap="round"/><circle cx="218.6" cy="62.90" r="1.6" fill="#c8c45a"/><text x="224.4" y="65.30" font-size="6.8" fill="#9ea8b4">系列3</text><path d="M215.8 72.75h5.6" stroke="#2ee0b0" stroke-width="1.6" stroke-linecap="round"/><circle cx="218.6" cy="72.55" r="1.6" fill="#2ee0b0"/><text x="224.4" y="74.95" font-size="6.8" fill="#9ea8b4">系列4</text><path d="M215.8 82.40h5.6" stroke="#2a9ac0" stroke-width="1.6" stroke-linecap="round"/><circle cx="218.6" cy="82.20" r="1.6" fill="#2a9ac0"/><text x="224.4" y="84.60" font-size="6.8" fill="#9ea8b4">系列5</text><path d="M215.8 92.05h5.6" stroke="#5a8a9a" stroke-width="1.6" stroke-linecap="round"/><circle cx="218.6" cy="91.85" r="1.6" fill="#5a8a9a"/><text x="224.4" y="94.25" font-size="6.8" fill="#9ea8b4">系列6</text><path d="M215.8 101.70h5.6" stroke="#6a40e0" stroke-width="1.6" stroke-linecap="round"/><circle cx="218.6" cy="101.50" r="1.6" fill="#6a40e0"/><text x="224.4" y="103.90" font-size="6.8" fill="#9ea8b4">系列7</text><path d="M215.8 111.35h5.6" stroke="#0a6aff" stroke-width="1.6" stroke-linecap="round"/><circle cx="218.6" cy="111.15" r="1.6" fill="#0a6aff"/><text x="224.4" y="113.55" font-size="6.8" fill="#9ea8b4">系列8</text></svg></div><!--/th2-->
<div id="th3" class="a" style="left:934px;top:459px;width:250px;height:125px;background:#191919"><svg class="a" style="left:0;top:0" width="250" height="125" viewBox="0 0 250 125"><rect width="250" height="125" rx="2" fill="#15130f"/><text x="125" y="13.3" text-anchor="middle" font-size="8.9" font-weight="bold" fill="#e8c88a">内置主题样式</text><rect x="4.5" y="19.5" width="118.5" height="12.5" fill="#1f1f23" stroke="#6a5a38"/><rect x="127.5" y="19.5" width="118" height="12.5" fill="#1f1f23" stroke="#6a5a38"/><text x="9" y="28.5" font-size="6.3" fill="#d0d0d0">文本控件</text><text x="132" y="28.5" font-size="6.3" fill="#d0d0d0">选项1</text><path d="M235 23.5l3.5 4 3.5-4" stroke="#d0d0d0" stroke-width="0.9" fill="none"/><rect x="4" y="34" width="119" height="87" fill="#1d1d20"/><rect x="127" y="34" width="119" height="87" fill="#1d1d20"/><path d="M22 44.5H119" stroke="#2c3a4a" stroke-width="0.8" stroke-dasharray="2 2.2"/><path d="M22 64.7H119" stroke="#2c3a4a" stroke-width="0.8" stroke-dasharray="2 2.2"/><path d="M22 84.9H119" stroke="#2c3a4a" stroke-width="0.8" stroke-dasharray="2 2.2"/><path d="M22 105.3H119" stroke="#30404e" stroke-width="0.8"/><text x="20" y="46.9" text-anchor="end" font-size="7" fill="#a8a8a8">900</text><text x="20" y="67.1" text-anchor="end" font-size="7" fill="#a8a8a8">600</text><text x="20" y="87.3" text-anchor="end" font-size="7" fill="#a8a8a8">300</text><text x="20" y="109.8" text-anchor="end" font-size="7" fill="#a8a8a8">0</text><rect x="25.9" y="80.8" width="3.9" height="24.3" fill="#fad58f"/><rect x="31.1" y="44.9" width="3.9" height="60.2" fill="#f68d3c"/><rect x="49.9" y="58.9" width="3.9" height="46.2" fill="#fad58f"/><rect x="55.2" y="75" width="3.9" height="30.1" fill="#f68d3c"/><rect x="76" y="80.8" width="3.9" height="24.3" fill="#fad58f"/><rect x="81.1" y="58.9" width="3.9" height="46.2" fill="#f68d3c"/><rect x="102" y="80.8" width="3.9" height="24.3" fill="#fad58f"/><rect x="107.2" y="67" width="3.9" height="38.1" fill="#f68d3c"/><text x="22.8" y="114.2" font-size="6.4" fill="#a8a8a8">分类1</text><text x="47.8" y="114.2" font-size="6.4" fill="#a8a8a8">分类2</text><text x="73.6" y="114.2" font-size="6.4" fill="#a8a8a8">分类3</text><text x="98.9" y="114.2" font-size="6.4" fill="#a8a8a8">分类4</text><path d="M169.90 39.00A38 38 0 0 1 207.20 84.25L197.68 82.40A28.3 28.3 0 0 0 169.90 48.70Z" fill="#fad58f" stroke="#1d1d20" stroke-width="0.5"/><path d="M207.20 84.25A38 38 0 0 1 180.06 113.62L177.46 104.27A28.3 28.3 0 0 0 197.68 82.40Z" fill="#f68d3c" stroke="#1d1d20" stroke-width="0.5"/><path d="M180.06 113.62A38 38 0 0 1 152.06 110.55L156.61 101.99A28.3 28.3 0 0 0 177.46 104.27Z" fill="#9a9a9a" stroke="#1d1d20" stroke-width="0.5"/><path d="M152.06 110.55A38 38 0 0 1 133.46 87.79L142.77 85.04A28.3 28.3 0 0 0 156.61 101.99Z" fill="#9a7f40" stroke="#1d1d20" stroke-width="0.5"/><path d="M133.46 87.79A38 38 0 0 1 133.76 65.26L142.99 68.25A28.3 28.3 0 0 0 142.77 85.04Z" fill="#fbdab2" stroke="#1d1d20" stroke-width="0.5"/><path d="M133.76 65.26A38 38 0 0 1 143.74 49.44L150.42 56.47A28.3 28.3 0 0 0 142.99 68.25Z" fill="#e9a262" stroke="#1d1d20" stroke-width="0.5"/><path d="M143.74 49.44A38 38 0 0 1 158.16 40.86L161.15 50.09A28.3 28.3 0 0 0 150.42 56.47Z" fill="#b9c9e2" stroke="#1d1d20" stroke-width="0.5"/><path d="M158.16 40.86A38 38 0 0 1 169.90 39.00L169.90 48.70A28.3 28.3 0 0 0 161.15 50.09Z" fill="#e9d87f" stroke="#1d1d20" stroke-width="0.5"/><path d="M215.8 43.80h5.6" stroke="#fad58f" stroke-width="1.6" stroke-linecap="round"/><circle cx="218.6" cy="43.60" r="1.6" fill="#fad58f"/><text x="224.4" y="46.00" font-size="6.8" fill="#a8a8a8">系列1</text><path d="M215.8 53.45h5.6" stroke="#f68d3c" stroke-width="1.6" stroke-linecap="round"/><circle cx="218.6" cy="53.25" r="1.6" fill="#f68d3c"/><text x="224.4" y="55.65" font-size="6.8" fill="#a8a8a8">系列2</text><path d="M215.8 63.10h5.6" stroke="#9a9a9a" stroke-width="1.6" stroke-linecap="round"/><circle cx="218.6" cy="62.90" r="1.6" fill="#9a9a9a"/><text x="224.4" y="65.30" font-size="6.8" fill="#a8a8a8">系列3</text><path d="M215.8 72.75h5.6" stroke="#9a7f40" stroke-width="1.6" stroke-linecap="round"/><circle cx="218.6" cy="72.55" r="1.6" fill="#9a7f40"/><text x="224.4" y="74.95" font-size="6.8" fill="#a8a8a8">系列4</text><path d="M215.8 82.40h5.6" stroke="#fbdab2" stroke-width="1.6" stroke-linecap="round"/><circle cx="218.6" cy="82.20" r="1.6" fill="#fbdab2"/><text x="224.4" y="84.60" font-size="6.8" fill="#a8a8a8">系列5</text><path d="M215.8 92.05h5.6" stroke="#e9a262" stroke-width="1.6" stroke-linecap="round"/><circle cx="218.6" cy="91.85" r="1.6" fill="#e9a262"/><text x="224.4" y="94.25" font-size="6.8" fill="#a8a8a8">系列6</text><path d="M215.8 101.70h5.6" stroke="#b9c9e2" stroke-width="1.6" stroke-linecap="round"/><circle cx="218.6" cy="101.50" r="1.6" fill="#b9c9e2"/><text x="224.4" y="103.90" font-size="6.8" fill="#a8a8a8">系列7</text><path d="M215.8 111.35h5.6" stroke="#e9d87f" stroke-width="1.6" stroke-linecap="round"/><circle cx="218.6" cy="111.15" r="1.6" fill="#e9d87f"/><text x="224.4" y="113.55" font-size="6.8" fill="#a8a8a8">系列8</text></svg></div><!--/th3-->
<div id="th4" class="a" style="left:409px;top:638px;width:250px;height:125px;background:#f3f4f6"><svg class="a" style="left:0;top:0" width="250" height="125" viewBox="0 0 250 125"><rect width="250" height="125" rx="2" fill="#f2f3f5"/><text x="125" y="13.3" text-anchor="middle" font-size="8.9" font-weight="bold" fill="#333333">内置主题样式</text><rect x="4.5" y="19.5" width="118.5" height="12.5" fill="#ffffff" stroke="#c9d5e3"/><rect x="127.5" y="19.5" width="118" height="12.5" fill="#ffffff" stroke="#c9d5e3"/><text x="9" y="28.5" font-size="6.3" fill="#666666">文本控件</text><text x="132" y="28.5" font-size="6.3" fill="#666666">选项1</text><path d="M235 23.5l3.5 4 3.5-4" stroke="#666666" stroke-width="0.9" fill="none"/><rect x="4" y="34" width="119" height="87" fill="#ffffff"/><rect x="127" y="34" width="119" height="87" fill="#ffffff"/><path d="M22 44.5H119" stroke="#d0d6de" stroke-width="0.8" stroke-dasharray="2 2.2"/><path d="M22 64.7H119" stroke="#d0d6de" stroke-width="0.8" stroke-dasharray="2 2.2"/><path d="M22 84.9H119" stroke="#d0d6de" stroke-width="0.8" stroke-dasharray="2 2.2"/><path d="M22 105.3H119" stroke="#c8d0da" stroke-width="0.8"/><text x="20" y="46.9" text-anchor="end" font-size="7" fill="#808080">900</text><text x="20" y="67.1" text-anchor="end" font-size="7" fill="#808080">600</text><text x="20" y="87.3" text-anchor="end" font-size="7" fill="#808080">300</text><text x="20" y="109.8" text-anchor="end" font-size="7" fill="#808080">0</text><rect x="25.9" y="80.8" width="3.9" height="24.3" fill="#7096ad"/><rect x="31.1" y="44.9" width="3.9" height="60.2" fill="#74cdb5"/><rect x="49.9" y="58.9" width="3.9" height="46.2" fill="#7096ad"/><rect x="55.2" y="75" width="3.9" height="30.1" fill="#74cdb5"/><rect x="76" y="80.8" width="3.9" height="24.3" fill="#7096ad"/><rect x="81.1" y="58.9" width="3.9" height="46.2" fill="#74cdb5"/><rect x="102" y="80.8" width="3.9" height="24.3" fill="#7096ad"/><rect x="107.2" y="67" width="3.9" height="38.1" fill="#74cdb5"/><text x="22.8" y="114.2" font-size="6.4" fill="#808080">分类1</text><text x="47.8" y="114.2" font-size="6.4" fill="#808080">分类2</text><text x="73.6" y="114.2" font-size="6.4" fill="#808080">分类3</text><text x="98.9" y="114.2" font-size="6.4" fill="#808080">分类4</text><path d="M169.90 39.00A38 38 0 0 1 207.20 84.25L197.68 82.40A28.3 28.3 0 0 0 169.90 48.70Z" fill="#7096ad" stroke="#ffffff" stroke-width="0.5"/><path d="M207.20 84.25A38 38 0 0 1 180.06 113.62L177.46 104.27A28.3 28.3 0 0 0 197.68 82.40Z" fill="#74cdb5" stroke="#ffffff" stroke-width="0.5"/><path d="M180.06 113.62A38 38 0 0 1 152.06 110.55L156.61 101.99A28.3 28.3 0 0 0 177.46 104.27Z" fill="#4e7ca8" stroke="#ffffff" stroke-width="0.5"/><path d="M152.06 110.55A38 38 0 0 1 133.46 87.79L142.77 85.04A28.3 28.3 0 0 0 156.61 101.99Z" fill="#a5a29a" stroke="#ffffff" stroke-width="0.5"/><path d="M133.46 87.79A38 38 0 0 1 133.76 65.26L142.99 68.25A28.3 28.3 0 0 0 142.77 85.04Z" fill="#f5d58c" stroke="#ffffff" stroke-width="0.5"/><path d="M133.76 65.26A38 38 0 0 1 143.74 49.44L150.42 56.47A28.3 28.3 0 0 0 142.99 68.25Z" fill="#5c7a8a" stroke="#ffffff" stroke-width="0.5"/><path d="M143.74 49.44A38 38 0 0 1 158.16 40.86L161.15 50.09A28.3 28.3 0 0 0 150.42 56.47Z" fill="#a86ef0" stroke="#ffffff" stroke-width="0.5"/><path d="M158.16 40.86A38 38 0 0 1 169.90 39.00L169.90 48.70A28.3 28.3 0 0 0 161.15 50.09Z" fill="#7a9ae0" stroke="#ffffff" stroke-width="0.5"/><path d="M215.8 43.80h5.6" stroke="#7096ad" stroke-width="1.6" stroke-linecap="round"/><circle cx="218.6" cy="43.60" r="1.6" fill="#7096ad"/><text x="224.4" y="46.00" font-size="6.8" fill="#808080">系列1</text><path d="M215.8 53.45h5.6" stroke="#74cdb5" stroke-width="1.6" stroke-linecap="round"/><circle cx="218.6" cy="53.25" r="1.6" fill="#74cdb5"/><text x="224.4" y="55.65" font-size="6.8" fill="#808080">系列2</text><path d="M215.8 63.10h5.6" stroke="#4e7ca8" stroke-width="1.6" stroke-linecap="round"/><circle cx="218.6" cy="62.90" r="1.6" fill="#4e7ca8"/><text x="224.4" y="65.30" font-size="6.8" fill="#808080">系列3</text><path d="M215.8 72.75h5.6" stroke="#a5a29a" stroke-width="1.6" stroke-linecap="round"/><circle cx="218.6" cy="72.55" r="1.6" fill="#a5a29a"/><text x="224.4" y="74.95" font-size="6.8" fill="#808080">系列4</text><path d="M215.8 82.40h5.6" stroke="#f5d58c" stroke-width="1.6" stroke-linecap="round"/><circle cx="218.6" cy="82.20" r="1.6" fill="#f5d58c"/><text x="224.4" y="84.60" font-size="6.8" fill="#808080">系列5</text><path d="M215.8 92.05h5.6" stroke="#5c7a8a" stroke-width="1.6" stroke-linecap="round"/><circle cx="218.6" cy="91.85" r="1.6" fill="#5c7a8a"/><text x="224.4" y="94.25" font-size="6.8" fill="#808080">系列6</text><path d="M215.8 101.70h5.6" stroke="#a86ef0" stroke-width="1.6" stroke-linecap="round"/><circle cx="218.6" cy="101.50" r="1.6" fill="#a86ef0"/><text x="224.4" y="103.90" font-size="6.8" fill="#808080">系列7</text><path d="M215.8 111.35h5.6" stroke="#7a9ae0" stroke-width="1.6" stroke-linecap="round"/><circle cx="218.6" cy="111.15" r="1.6" fill="#7a9ae0"/><text x="224.4" y="113.55" font-size="6.8" fill="#808080">系列8</text></svg></div><!--/th4-->
<div class="t" style="left:409px;top:592px;width:250px;text-align:center;font-size:18px;color:#4655fb">深色主题一</div>
<div class="t" style="left:671px;top:592px;width:250px;text-align:center;font-size:18px;color:#333">深色主题二</div>
<div class="t" style="left:934px;top:592px;width:250px;text-align:center;font-size:18px;color:#333">深色主题三</div>
<div class="t" style="left:409px;top:771px;width:250px;text-align:center;font-size:18px;color:#333">浅色主题一</div>
<div class="a" style="left:1143px;top:820px;width:115px;height:40px;border:1px solid #d9d9d9;border-radius:2px;background:#fff"></div>
<div class="t" style="left:1143px;top:832px;width:115px;text-align:center;font-size:15px;color:#333">取消</div>
<div class="a" style="left:1263px;top:820px;width:116px;height:40px;background:#4655fb;border:2px solid #f8232b"></div>
<div class="t" style="left:1263px;top:832px;width:116px;text-align:center;font-size:15px;color:#fff">创建看板</div>
<div class="badge" style="left:1301.5px;top:784px">3</div>
</body></html>
